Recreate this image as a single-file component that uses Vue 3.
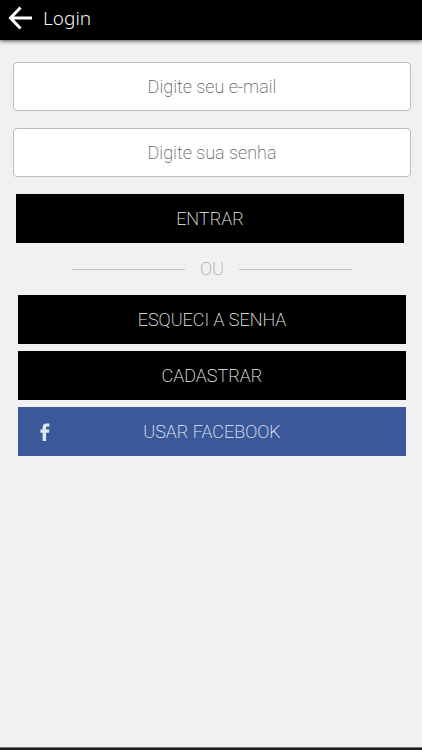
<script setup>
import { ref } from 'vue'

const email = ref('')
const password = ref('')
</script>

<template>
  <div class="screen">
    <header class="bar">
      <button class="back" type="button" aria-label="Voltar">
        <svg viewBox="0 0 24 24" width="24" height="24" aria-hidden="true">
          <path d="M12.5 1.5 L2.5 12 L12.5 22.5 M2.5 12 H24" />
        </svg>
      </button>
      <h1 class="title">Login</h1>
    </header>

    <main class="content">
      <form class="form" @submit.prevent>
        <input v-model="email" class="field" type="email" placeholder="Digite seu e-mail" aria-label="Digite seu e-mail" />
        <input v-model="password" class="field" type="password" placeholder="Digite sua senha" aria-label="Digite sua senha" />
        <button class="btn submit" type="submit">ENTRAR</button>
      </form>

      <div class="divider"><span>OU</span></div>

      <div class="actions">
        <button class="btn" type="button">ESQUECI A SENHA</button>
        <button class="btn" type="button">CADASTRAR</button>
        <button class="btn facebook" type="button">
          <svg class="fb" viewBox="0 0 10 18" width="10" height="18" aria-hidden="true">
            <path d="M2.6 18 V9.8 H0.4 V6.5 H2.6 V4.4 C2.6 1.6 4 0.4 6.4 0.4 H9.4 V3.5 H7.5 C6.5 3.5 6.1 3.9 6.1 4.8 V6.5 H9.3 L8.9 9.8 H6.1 V18 Z" />
          </svg>
          <span>USAR FACEBOOK</span>
        </button>
      </div>
    </main>

    <div class="foot"></div>
  </div>
</template>

<style>
body {
  background: #f1f1f1;
}
</style>

<style scoped>
.screen {
  display: flex;
  flex-direction: column;
  min-height: 100vh;
  background: #f1f1f1;
  font-family: Roboto, "Liberation Sans", sans-serif;
  font-weight: 200;
}

.bar {
  display: flex;
  align-items: center;
  gap: 11px;
  height: 40px;
  padding: 0 8px 5px;
  box-sizing: border-box;
  background: #000;
  box-shadow: 0 1px 4px rgba(0, 0, 0, 0.7);
}

.back {
  display: flex;
  padding: 0;
  border: 0;
  background: none;
}

.back path {
  fill: none;
  stroke: #fff;
  stroke-width: 3;
}

.title {
  margin: 0;
  color: #f4f4f4;
  font-family: "Noto Sans", "Open Sans", sans-serif;
  font-size: 19px;
  font-weight: 300;
  line-height: 24px;
}

.content {
  flex: 1;
  padding: 22px 11px 22px 13px;
}

.form {
  display: flex;
  flex-direction: column;
  gap: 17px;
}

.field {
  height: 49px;
  padding: 0 12px;
  box-sizing: border-box;
  border: 1px solid #bdbdbd;
  border-radius: 4px;
  background: #fff;
  color: #555;
  font: inherit;
  font-size: 18px;
  text-align: center;
}

.field::placeholder {
  color: #606060;
  opacity: 1;
}

.btn {
  display: block;
  width: 100%;
  height: 49px;
  padding: 0;
  border: 0;
  background: #000;
  color: #f2f2f2;
  font: inherit;
  font-size: 18px;
  line-height: 24px;
}

.submit {
  width: auto;
  margin: 0 7px 0 3px;
}

.divider {
  display: flex;
  align-items: center;
  gap: 15px;
  padding: 14px 59px;
  color: #a8a8a8;
  font-size: 18px;
  line-height: 24px;
}

.divider::before,
.divider::after {
  content: "";
  flex: 1;
  height: 1px;
  background: #c4c4c4;
}

.actions {
  display: grid;
  gap: 7px;
  padding: 0 5px;
}

.facebook {
  position: relative;
  background: #3b5998;
  color: #e4f0fc;
}

.fb {
  position: absolute;
  top: 16px;
  left: 22px;
  fill: #dfe6f5;
}

.foot {
  height: 2px;
  border-top: 1px solid #777;
  background: #1c1a1c;
}
</style>
